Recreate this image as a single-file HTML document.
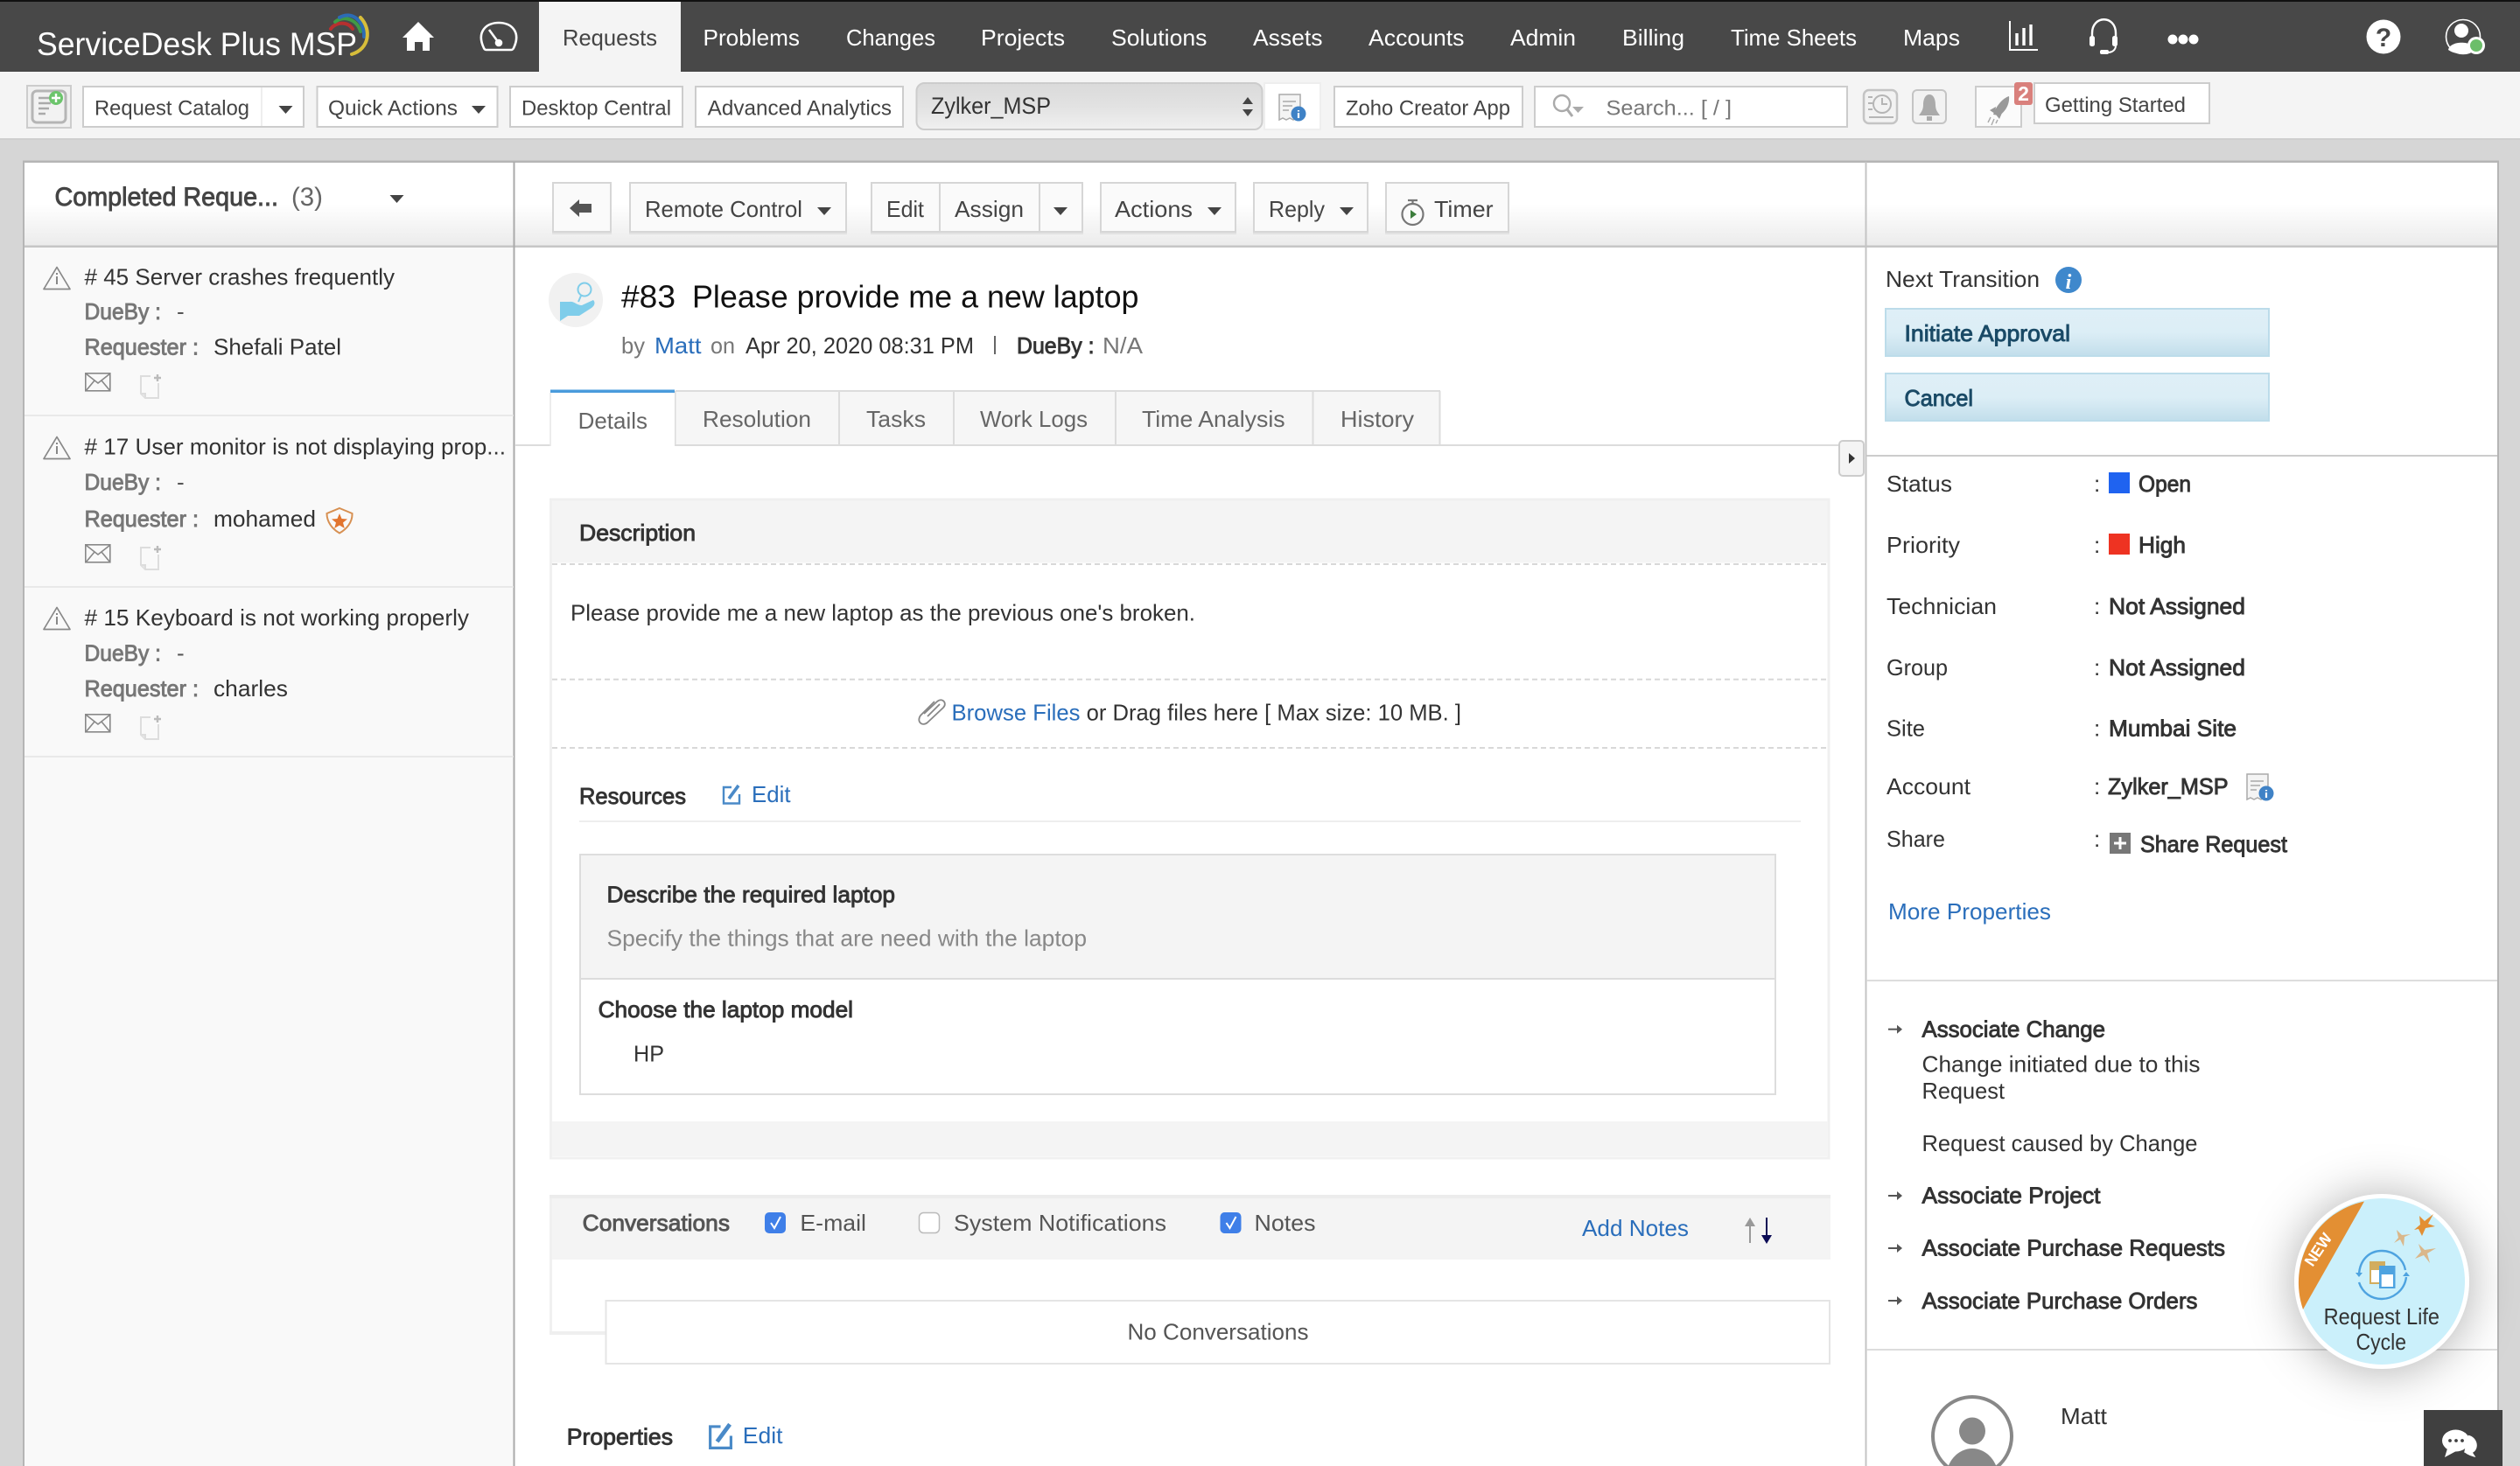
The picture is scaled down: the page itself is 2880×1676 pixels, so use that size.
<!DOCTYPE html>
<html lang="en"><head><meta charset="utf-8"><title>ServiceDesk Plus MSP</title>
<style>
html,body{margin:0;padding:0;background:#d6d6d6;width:2880px;height:1676px;overflow:hidden}
svg{display:block;font-family:"Liberation Sans",sans-serif;font-size:26px;fill:#333}
.n{fill:#fff}
.t{font-size:24px;fill:#444}
.m{stroke:currentColor;stroke-width:.9}
.dk{color:#333;fill:#333}
.g{color:#777;fill:#777}
.a{fill:#444}
.l{fill:#2a6ebb}
.tb{fill:#666}
</style></head><body>
<svg xmlns="http://www.w3.org/2000/svg" width="2880" height="1676" viewBox="0 0 2880 1676">
<defs>
<linearGradient id="hg" x1="0" y1="0" x2="0" y2="1"><stop offset="0" stop-color="#fff"/><stop offset=".5" stop-color="#fff"/><stop offset="1" stop-color="#ebebeb"/></linearGradient>
<linearGradient id="sel" x1="0" y1="0" x2="0" y2="1"><stop offset="0" stop-color="#dadada"/><stop offset=".5" stop-color="#e2e2e2"/><stop offset="1" stop-color="#f0f0f0"/></linearGradient>
<linearGradient id="bl" x1="0" y1="0" x2="0" y2="1"><stop offset="0" stop-color="#dfeff7"/><stop offset=".5" stop-color="#dceef6"/><stop offset="1" stop-color="#c2deeb"/></linearGradient>
<path id="c" d="M-8-4H8L0 5z" fill="#444"/>
<g id="warn" fill="none" stroke="#888" stroke-width="1.7" stroke-linejoin="round"><path d="M15 .5 30 25.5H0z"/><path d="M15 11v9M15 7v2" stroke-width="2"/></g>
<g id="env" fill="none" stroke="#888" stroke-width="1.6"><rect x=".8" y=".8" width="28" height="20"/><path d="M1 1 15 12 29 1M1 21 11 9M29 21 19 9"/></g>
<g id="doc" fill="none" stroke="#ddd" stroke-width="2"><path d="M12 2H1V22L6 27H21V10"/><path d="M1 22H6V27" fill="#e6e6e6"/><path d="M20 0V8M16 4H24" stroke="#bbb" stroke-width="2.4"/></g>
<g id="arr" fill="#555"><path d="M0-1H11V1H0z"/><path d="M10-5 16 0 10 5z"/></g>
<g id="rec"><path d="M3 1H27V30L23 28 19 30 15 28 11 30 7 28 3 30z" fill="#f4f4f4" stroke="#aaa" stroke-width="1.5"/><path d="M7 9H22M7 14H18M7 19H14" stroke="#aaa" stroke-width="1.5"/><circle cx="25" cy="23" r="8.5" fill="#3f82c6"/><path d="M25 19v1.5M25 22v6" stroke="#fff" stroke-width="2.2"/></g>
<g id="ed" fill="none" stroke="#4a8ac8" stroke-width="2.4"><path d="M11 3H2V21.500H20V11"/><path d="M8 16 19 1" stroke-width="3.600"/></g>
</defs>

<rect width="2880" height="1676" fill="#d6d6d6"/>
<rect width="2880" height="3" fill="#111"/>
<rect y="2" width="2880" height="80" fill="#484848"/>
<rect y="82" width="2880" height="76" fill="#f4f4f4"/>
<rect y="158" width="2880" height="2" fill="#cfcfcf"/>

<!-- logo -->
<text class="n" x="42" y="63" font-size="37" textLength="366" lengthAdjust="spacingAndGlyphs">ServiceDesk Plus MSP</text>
<g fill="none" stroke-width="4" stroke-linecap="round">
<path d="M378 33C384 25 397 24 403 33" stroke="#b6302f"/>
<path d="M383 25C393 17 408 22 412 36" stroke="#3f9a46"/>
<path d="M388 20C402 12 417 24 416 42" stroke="#2c6cb5"/>
<path d="M412 20C425 34 422 56 402 62" stroke="#d7bd3a"/>
</g>
<!-- home/gauge -->
<path d="M478 25 496 43H491V58H483V48H474V58H465V43H460z" fill="#fff"/>
<g fill="none" stroke="#fff" stroke-width="2.6"><path d="M553 55C544 36 556 26 570 26S596 36 587 55C586 57 585 57 584 57H556C555 57 554 57 553 55z"/><path d="M559 34 570 49" stroke-width="2.6"/></g><circle cx="570" cy="49" r="4.3" fill="#fff"/>

<rect x="616" y="2" width="162" height="80" fill="#f4f4f4"/>
<text class="a" x="643" y="52" textLength="108" lengthAdjust="spacingAndGlyphs">Requests</text>
<text class="n" x="803.5" y="52" textLength="110.5" lengthAdjust="spacingAndGlyphs">Problems</text>
<text class="n" x="967" y="52" textLength="102" lengthAdjust="spacingAndGlyphs">Changes</text>
<text class="n" x="1121" y="52" textLength="96" lengthAdjust="spacingAndGlyphs">Projects</text>
<text class="n" x="1270" y="52" textLength="109.5" lengthAdjust="spacingAndGlyphs">Solutions</text>
<text class="n" x="1432" y="52" textLength="79.5" lengthAdjust="spacingAndGlyphs">Assets</text>
<text class="n" x="1564" y="52" textLength="109.5" lengthAdjust="spacingAndGlyphs">Accounts</text>
<text class="n" x="1726" y="52" textLength="75" lengthAdjust="spacingAndGlyphs">Admin</text>
<text class="n" x="1854" y="52" textLength="71" lengthAdjust="spacingAndGlyphs">Billing</text>
<text class="n" x="1978" y="52" textLength="144" lengthAdjust="spacingAndGlyphs">Time Sheets</text>
<text class="n" x="2175" y="52" textLength="65" lengthAdjust="spacingAndGlyphs">Maps</text>
<!-- nav right icons -->
<path d="M2297 24V57H2329" fill="none" stroke="#fff" stroke-width="2"/><path d="M2305 38v14M2313 32v20M2321 28v24" stroke="#fff" stroke-width="3.4"/>
<g fill="none" stroke="#fff"><path d="M2391 44V38C2391 17 2418 17 2418 38V44" stroke-width="2.4"/><path d="M2418 52C2418 57 2414 60 2409 60" stroke-width="2"/></g><rect x="2388" y="41" width="6" height="12" rx="2.5" fill="#fff"/><rect x="2414" y="41" width="6" height="12" rx="2.5" fill="#fff"/><rect x="2400" y="57" width="10" height="5" rx="2" fill="#fff"/>
<circle cx="2483" cy="45" r="5.5" fill="#fff"/><circle cx="2495" cy="45" r="5.5" fill="#fff"/><circle cx="2507" cy="45" r="5.5" fill="#fff"/>
<circle cx="2724" cy="42" r="19.5" fill="#fff"/><text x="2724" y="53" text-anchor="middle" font-size="30" font-weight="bold" fill="#484848">?</text>
<circle cx="2815" cy="42" r="19.5" fill="none" stroke="#fff" stroke-width="1.6"/><circle cx="2813" cy="35" r="8" fill="#fff"/><path d="M2798 57C2800 46 2826 46 2830 57C2822 63 2806 63 2798 57z" fill="#fff"/><circle cx="2830" cy="52" r="10" fill="#fff"/><circle cx="2830" cy="52" r="7" fill="#6cbe6a"/>

<!-- toolbar -->
<rect x="31" y="98" width="50" height="48" fill="#f0f0f0" stroke="#ccc" stroke-width="2"/>
<rect x="37" y="104" width="38" height="36" rx="5" fill="#f2f2f2" stroke="#b5b5b5" stroke-width="3"/>
<path d="M44 112H58M44 118H58M44 124H56M44 130H52" stroke="#aaa" stroke-width="2.400"/><circle cx="64" cy="112" r="8" fill="#6cc56c"/><path d="M64 107v10M59 112h10" stroke="#fff" stroke-width="2.4"/>
<g fill="#fff" stroke="#ccc" stroke-width="2">
<rect x="95" y="99" width="252" height="46"/>
<rect x="362.5" y="99" width="206" height="46"/>
<rect x="583" y="99" width="197" height="46"/>
<rect x="795" y="99" width="237" height="46"/>
<rect x="1525" y="99" width="215" height="46"/>
<rect x="1754" y="99" width="357" height="46"/>
</g>
<path d="M299 100v44" stroke="#eee" stroke-width="2"/>
<text class="t" x="108" y="131.5" textLength="177" lengthAdjust="spacingAndGlyphs">Request Catalog</text>
<use href="#c" x="326.5" y="125"/>
<text class="t" x="375" y="131.5" textLength="148" lengthAdjust="spacingAndGlyphs">Quick Actions</text>
<use href="#c" x="547" y="125"/>
<text class="t" x="596" y="131.5" textLength="171" lengthAdjust="spacingAndGlyphs">Desktop Central</text>
<text class="t" x="808.7" y="131.5" textLength="210.3" lengthAdjust="spacingAndGlyphs">Advanced Analytics</text>
<rect x="1047.5" y="95" width="395" height="53" rx="9" fill="url(#sel)" stroke="#ccc" stroke-width="2"/>
<text x="1064" y="130" font-size="27" textLength="137" lengthAdjust="spacingAndGlyphs" fill="#333">Zylker_MSP</text>
<path d="M1426 111 1432 119H1420zM1426 133 1432 125H1420z" fill="#444"/>
<rect x="1445" y="95" width="64" height="53" fill="#fff" stroke="#eee" stroke-width="2"/>
<use href="#rec" x="1459" y="107"/>
<text class="t" x="1538" y="131.5" textLength="188" lengthAdjust="spacingAndGlyphs">Zoho Creator App</text>
<circle cx="1785" cy="118" r="9" fill="none" stroke="#aaa" stroke-width="2.4"/><path d="M1791 125 1797 133" stroke="#aaa" stroke-width="3"/><path d="M1797 122H1810L1803.5 129z" fill="#aaa"/>
<text x="1835.5" y="131.5" font-size="24" textLength="143.5" lengthAdjust="spacingAndGlyphs" fill="#777">Search... [ / ]</text>
<rect x="2130" y="103" width="38" height="38" rx="6" fill="#f2f2f2" stroke="#c4c4c4" stroke-width="2.5"/><circle cx="2151" cy="119" r="10" fill="none" stroke="#b5b5b5" stroke-width="2"/><path d="M2151 112v7h6M2135 111h5M2135 118h5M2135 125h5M2136 134h28" stroke="#b5b5b5" stroke-width="2" fill="none"/>
<rect x="2186" y="103" width="38" height="38" rx="5" fill="#f2f2f2" stroke="#c4c4c4" stroke-width="2"/><path d="M2205 108C2200 108 2198 114 2198 120C2198 126 2195 129 2193 132H2217C2215 129 2212 126 2212 120C2212 114 2210 108 2205 108zM2202 133H2208V138H2202z" fill="#aaa"/>
<rect x="2258" y="99" width="52" height="46" fill="#fbfbfb" stroke="#ccc" stroke-width="2"/>
<path d="M2296 110C2287 113 2280 124 2278 131L2285 132C2291 128 2297 120 2296 110z" fill="#999"/><path d="M2274 126 2281 122 2280 130zM2285 136 2289 127 2281 131z" fill="#999"/><path d="M2275 134 2272 140M2279 136 2276 143M2283 137 2281 141" stroke="#aaa" stroke-width="1.4"/>
<rect x="2325" y="95" width="200" height="46" fill="#fff" stroke="#ccc" stroke-width="2"/>
<rect x="2302" y="94" width="21" height="26" rx="3" fill="#d9807c"/><text x="2312.5" y="115" text-anchor="middle" font-size="23" font-weight="bold" fill="#fff">2</text>
<text class="t" x="2337" y="128" textLength="161" lengthAdjust="spacingAndGlyphs">Getting Started</text>

<!-- main panel -->
<rect x="26" y="184" width="2830" height="1492" fill="#fff"/>
<rect x="26" y="186" width="2828" height="95" fill="url(#hg)"/>
<rect x="26" y="183.5" width="2830" height="2.5" fill="#b5b5b5"/>
<rect x="26" y="184" width="2" height="1492" fill="#b5b5b5"/>
<rect x="2854" y="184" width="2" height="1492" fill="#b5b5b5"/>
<rect x="28" y="282" width="559" height="1394" fill="#f9f9f9"/>
<rect x="28" y="280.5" width="2826" height="2.5" fill="#c6c6c6"/>
<rect x="586.5" y="185" width="2" height="1491" fill="#aaa"/>
<rect x="2131.5" y="185" width="2" height="1491" fill="#c4c4c4"/>

<text x="62.5" y="235" font-size="30" textLength="255.5" lengthAdjust="spacingAndGlyphs" class="m" style="color:#444;fill:#444">Completed Reque...</text>
<text x="333" y="235" font-size="30" textLength="36" lengthAdjust="spacingAndGlyphs" fill="#666">(3)</text>
<use href="#c" x="453.5" y="227"/>

<!-- action buttons -->
<g fill="#e2e2e2"><rect x="631" y="265" width="68" height="3"/><rect x="719" y="265" width="249" height="3"/><rect x="995" y="265" width="243" height="3"/><rect x="1257" y="265" width="156" height="3"/><rect x="1432" y="265" width="132" height="3"/><rect x="1583" y="265" width="142" height="3"/></g>
<g fill="#fafafa" stroke="#d6d6d6" stroke-width="2">
<rect x="632" y="209" width="66" height="56"/>
<rect x="720" y="209" width="247" height="56"/>
<rect x="996" y="209" width="241" height="56"/>
<rect x="1258" y="209" width="154" height="56"/>
<rect x="1433" y="209" width="130" height="56"/>
<rect x="1584" y="209" width="140" height="56"/>
</g>
<path d="M1074 210v54M1188 210v54" stroke="#d6d6d6" stroke-width="2"/>
<path d="M651 238 662 228V233H676V243H662V248z" fill="#555"/>
<text class="a" x="737" y="248" textLength="180" lengthAdjust="spacingAndGlyphs">Remote Control</text><use href="#c" x="942" y="241"/>
<text class="a" x="1013" y="248" textLength="43" lengthAdjust="spacingAndGlyphs">Edit</text>
<text class="a" x="1091" y="248" textLength="79" lengthAdjust="spacingAndGlyphs">Assign</text><use href="#c" x="1212" y="241"/>
<text class="a" x="1274" y="248" textLength="89" lengthAdjust="spacingAndGlyphs">Actions</text><use href="#c" x="1388" y="241"/>
<text class="a" x="1450" y="248" textLength="64" lengthAdjust="spacingAndGlyphs">Reply</text><use href="#c" x="1539" y="241"/>
<circle cx="1614.5" cy="245" r="12" fill="none" stroke="#777" stroke-width="2.2"/><path d="M1609 229h11M1614.5 229v4" stroke="#777" stroke-width="2.2"/><path d="M1612 240 1619 245 1612 250z" fill="#3c7d3c"/>
<text class="a" x="1639" y="248" textLength="67.6" lengthAdjust="spacingAndGlyphs">Timer</text>

<!-- left list -->
<rect x="28" y="474" width="559" height="2" fill="#e9e9e9"/><rect x="28" y="670" width="559" height="2" fill="#e9e9e9"/><rect x="28" y="864" width="559" height="2" fill="#e9e9e9"/>
<use href="#warn" x="50" y="305"/><use href="#warn" x="50" y="499"/><use href="#warn" x="50" y="694"/>
<text x="96.500" y="325.5" textLength="354.500" lengthAdjust="spacingAndGlyphs">#&#160;45 Server crashes frequently</text>
<text x="96.500" y="365" class="g m" textLength="87.500" lengthAdjust="spacingAndGlyphs">DueBy :</text><text x="202" y="365" fill="#555">-</text>
<text x="96.500" y="405.7" class="g m" textLength="130.500" lengthAdjust="spacingAndGlyphs">Requester :</text><text x="244" y="405.7" textLength="146" lengthAdjust="spacingAndGlyphs">Shefali Patel</text>
<use href="#env" x="97" y="426"/><use href="#doc" x="160" y="428"/>
<text x="96.500" y="519.500" textLength="481.500" lengthAdjust="spacingAndGlyphs">#&#160;17 User monitor is not displaying prop...</text>
<text x="96.500" y="560" class="g m" textLength="87.500" lengthAdjust="spacingAndGlyphs">DueBy :</text><text x="202" y="560" fill="#555">-</text>
<text x="96.500" y="602" class="g m" textLength="130.500" lengthAdjust="spacingAndGlyphs">Requester :</text><text x="244" y="602" textLength="117" lengthAdjust="spacingAndGlyphs">mohamed</text>
<path d="M388 581 402.5 587C403 597 396 605 388 609.5C380 605 373.500 597 373.500 587z" fill="none" stroke="#d79052" stroke-width="2"/><path d="M388 587 390.500 593 397 593.500 392 597.500 393.800 604 388 600.500 382.200 604 384 597.500 379 593.500 385.500 593z" fill="#e2752f"/>
<use href="#env" x="97" y="622"/><use href="#doc" x="160" y="624"/>
<text x="96.500" y="715" textLength="439.500" lengthAdjust="spacingAndGlyphs">#&#160;15 Keyboard is not working properly</text>
<text x="96.500" y="755.500" class="g m" textLength="87.500" lengthAdjust="spacingAndGlyphs">DueBy :</text><text x="202" y="755.500" fill="#555">-</text>
<text x="96.500" y="796" class="g m" textLength="130.500" lengthAdjust="spacingAndGlyphs">Requester :</text><text x="244" y="796" textLength="85" lengthAdjust="spacingAndGlyphs">charles</text>
<use href="#env" x="97" y="816"/><use href="#doc" x="160" y="818"/>

<!-- center title -->
<ellipse cx="658" cy="343" rx="31" ry="31" fill="#f1f1f1"/>
<circle cx="668" cy="331" r="7.500" fill="none" stroke="#7fcdea" stroke-width="2"/><path d="M664 338 661 345" stroke="#7fcdea" stroke-width="2"/><path d="M640 345 H651 C656 344 659 349 665 349 L678 343 C681 346 679 350 676 352 L662 361 H649 L640 367z" fill="#7fcdea"/>
<text x="710" y="351.600" font-size="36" textLength="62" lengthAdjust="spacingAndGlyphs" fill="#111">#83</text>
<text x="791" y="351.600" font-size="36" textLength="510.500" lengthAdjust="spacingAndGlyphs" fill="#111">Please provide me a new laptop</text>
<text x="710" y="404" textLength="27" lengthAdjust="spacingAndGlyphs" fill="#777">by</text>
<text class="l" x="748" y="404" textLength="53.500" lengthAdjust="spacingAndGlyphs">Matt</text>
<text x="812" y="404" textLength="28" lengthAdjust="spacingAndGlyphs" fill="#777">on</text>
<text x="852" y="404" textLength="261" lengthAdjust="spacingAndGlyphs">Apr 20, 2020 08:31 PM</text>
<rect x="1136" y="384" width="2" height="21" fill="#666"/>
<text x="1162" y="404" class="dk m" textLength="88.500" lengthAdjust="spacingAndGlyphs">DueBy :</text>
<text x="1260" y="404" textLength="46" lengthAdjust="spacingAndGlyphs" fill="#777">N/A</text>

<!-- tabs -->
<rect x="589" y="508" width="1512" height="2" fill="#dcdcdc"/>
<rect x="772" y="446" width="874" height="62" fill="#f6f6f6"/>
<rect x="772" y="446" width="874" height="2" fill="#dcdcdc"/>
<path d="M771.500 447V508M959 447V508M1090 447V508M1275 447V508M1500.500 447V508M1645.500 447V508" stroke="#dcdcdc" stroke-width="2"/>
<rect x="629" y="446" width="142" height="66" fill="#fff"/>
<rect x="629" y="445.500" width="142" height="3.500" fill="#4a9bdc"/>
<path d="M629 449V510" stroke="#e6e6e6" stroke-width="1.500"/>
<text class="tb" x="660.600" y="490" textLength="79.400" lengthAdjust="spacingAndGlyphs">Details</text>
<text class="tb" x="803" y="488" textLength="124" lengthAdjust="spacingAndGlyphs">Resolution</text>
<text class="tb" x="990" y="488" textLength="68" lengthAdjust="spacingAndGlyphs">Tasks</text>
<text class="tb" x="1120" y="488" textLength="123" lengthAdjust="spacingAndGlyphs">Work Logs</text>
<text class="tb" x="1305" y="488" textLength="163.600" lengthAdjust="spacingAndGlyphs">Time Analysis</text>
<text class="tb" x="1532" y="488" textLength="84" lengthAdjust="spacingAndGlyphs">History</text>
<rect x="2102" y="504" width="28" height="40" rx="4" fill="#f4f4f4" stroke="#ccc" stroke-width="2"/><path d="M2113 518 2120 524 2113 530z" fill="#333"/>

<!-- description block -->
<rect x="629.500" y="571" width="1460.500" height="753" fill="#fff" stroke="#f0f0f0" stroke-width="3"/>
<rect x="631" y="572.500" width="1457.500" height="71" fill="#f4f4f4"/>
<path d="M631 645H2089M631 776.700H2089M631 855H2089" stroke="#d8d8d8" stroke-width="2" stroke-dasharray="6 4"/>
<text x="662" y="618" class="dk m" textLength="133" lengthAdjust="spacingAndGlyphs">Description</text>
<text x="652" y="709.500" textLength="714" lengthAdjust="spacingAndGlyphs">Please provide me a new laptop as the previous one's broken.</text>
<path d="M1056 816 1071 802C1077 797 1083 804 1078 809L1060 826C1054 831 1047 825 1052 818L1068 802M1060 819 1074 805" fill="none" stroke="#888" stroke-width="1.800"/>
<text class="l" x="1087.500" y="823.600" textLength="147" lengthAdjust="spacingAndGlyphs">Browse Files</text>
<text x="1241.600" y="823.600" textLength="428.400" lengthAdjust="spacingAndGlyphs">or Drag files here [ Max size: 10 MB. ]</text>
<text x="662" y="919" class="dk m" textLength="122" lengthAdjust="spacingAndGlyphs">Resources</text>
<use href="#ed" x="825" y="897"/>
<text class="l" x="859" y="917" textLength="44.500" lengthAdjust="spacingAndGlyphs">Edit</text>
<rect x="662" y="938" width="1396" height="2" fill="#eee"/>
<rect x="663" y="977" width="1366" height="274" fill="#fff" stroke="#ddd" stroke-width="2"/>
<rect x="664" y="978" width="1364" height="140" fill="#f4f4f4"/>
<rect x="664" y="1118" width="1364" height="2" fill="#dcdcdc"/>
<text x="693.500" y="1031.700" class="dk m" textLength="329.500" lengthAdjust="spacingAndGlyphs">Describe the required laptop</text>
<text x="693.500" y="1081.700" textLength="548.500" lengthAdjust="spacingAndGlyphs" fill="#888">Specify the things that are need with the laptop</text>
<text x="683.600" y="1163" class="dk m" textLength="291.400" lengthAdjust="spacingAndGlyphs">Choose the laptop model</text>
<text x="724" y="1213.500" textLength="35" lengthAdjust="spacingAndGlyphs">HP</text>
<rect x="631" y="1282" width="1458" height="40" fill="#f4f4f4"/>

<!-- conversations -->
<rect x="628" y="1366" width="1464" height="4" fill="#ececec"/>
<rect x="631" y="1370" width="1461" height="70" fill="#f4f4f4"/>
<rect x="628" y="1370" width="3" height="156" fill="#f0f0f0"/>
<rect x="628" y="1522" width="64" height="4" fill="#efefef"/>
<text x="665.700" y="1407" textLength="168.300" lengthAdjust="spacingAndGlyphs" class="m" style="color:#555;fill:#555">Conversations</text>
<rect x="874" y="1386" width="24" height="24" rx="5" fill="#3f7fe8"/><path d="M881 1398 885 1404 892 1391" fill="none" stroke="#fff" stroke-width="2"/>
<text x="914.400" y="1407" textLength="75.600" lengthAdjust="spacingAndGlyphs" fill="#555">E-mail</text>
<rect x="1050.500" y="1386.500" width="23" height="23" rx="5" fill="#fff" stroke="#bbb" stroke-width="1.500"/>
<text x="1090" y="1407" textLength="243" lengthAdjust="spacingAndGlyphs" fill="#555">System Notifications</text>
<rect x="1394.500" y="1386" width="24" height="24" rx="5" fill="#3f7fe8"/><path d="M1401.500 1398 1405.500 1404 1412.500 1391" fill="none" stroke="#fff" stroke-width="2"/>
<text x="1433.500" y="1407" textLength="70" lengthAdjust="spacingAndGlyphs" fill="#555">Notes</text>
<text class="l" x="1808" y="1413" textLength="122" lengthAdjust="spacingAndGlyphs">Add Notes</text>
<path d="M2000 1398V1421" stroke="#999" stroke-width="2"/><path d="M1994 1402 2000 1392 2006 1402z" fill="#999"/>
<path d="M2019 1392V1416" stroke="#0b0b55" stroke-width="2"/><path d="M2013 1412 2019 1422 2025 1412z" fill="#0b0b55"/>
<rect x="692.500" y="1487" width="1398.500" height="72" fill="#fff" stroke="#e5e5e5" stroke-width="2"/>
<text x="1288.500" y="1531.700" textLength="207" lengthAdjust="spacingAndGlyphs" fill="#555">No Conversations</text>
<text x="647.800" y="1651.700" class="dk m" textLength="121.200" lengthAdjust="spacingAndGlyphs">Properties</text>
<g transform="translate(809 1627) scale(1.320)"><use href="#ed"/></g>
<text class="l" x="848.800" y="1650" textLength="45.700" lengthAdjust="spacingAndGlyphs">Edit</text>

<!-- right panel -->
<text x="2155" y="328" textLength="176" lengthAdjust="spacingAndGlyphs">Next Transition</text>
<circle cx="2364" cy="320" r="15" fill="#3f88cc"/><text x="2364" y="330" text-anchor="middle" font-size="24" font-family="Liberation Serif" font-style="italic" font-weight="bold" fill="#fff">i</text>
<rect x="2155" y="353" width="438" height="54" fill="url(#bl)" stroke="#bcdcea" stroke-width="2"/>
<text x="2176.500" y="390" textLength="189.500" lengthAdjust="spacingAndGlyphs" class="m" style="color:#1a4a66;fill:#1a4a66">Initiate Approval</text>
<rect x="2155" y="427" width="438" height="54" fill="url(#bl)" stroke="#bcdcea" stroke-width="2"/>
<text x="2176.500" y="464" textLength="78.500" lengthAdjust="spacingAndGlyphs" class="m" style="color:#1a4a66;fill:#1a4a66">Cancel</text>
<rect x="2133" y="520" width="721" height="2" fill="#ccc"/>
<text x="2156" y="562" textLength="75" lengthAdjust="spacingAndGlyphs">Status</text><text x="2393" y="562">:</text><rect x="2410" y="540" width="24" height="24" fill="#1f63f0"/><text x="2444" y="562" class="dk m" textLength="60" lengthAdjust="spacingAndGlyphs">Open</text>
<text x="2156" y="632" textLength="84" lengthAdjust="spacingAndGlyphs">Priority</text><text x="2393" y="632">:</text><rect x="2410" y="610" width="24" height="24" fill="#ee3322"/><text x="2444" y="632" class="dk m" textLength="54" lengthAdjust="spacingAndGlyphs">High</text>
<text x="2156" y="702" textLength="126" lengthAdjust="spacingAndGlyphs">Technician</text><text x="2393" y="702">:</text><text x="2410" y="702" class="dk m" textLength="156" lengthAdjust="spacingAndGlyphs">Not Assigned</text>
<text x="2156" y="772" textLength="70" lengthAdjust="spacingAndGlyphs">Group</text><text x="2393" y="772">:</text><text x="2410" y="772" class="dk m" textLength="156" lengthAdjust="spacingAndGlyphs">Not Assigned</text>
<text x="2156" y="841.600" textLength="44" lengthAdjust="spacingAndGlyphs">Site</text><text x="2393" y="841.600">:</text><text x="2410" y="841.600" class="dk m" textLength="146" lengthAdjust="spacingAndGlyphs">Mumbai Site</text>
<text x="2156" y="908" textLength="96" lengthAdjust="spacingAndGlyphs">Account</text><text x="2393" y="908">:</text><text x="2409" y="908" class="dk m" textLength="137.600" lengthAdjust="spacingAndGlyphs">Zylker_MSP</text>
<use href="#rec" x="2565" y="884"/>
<text x="2156" y="968" textLength="67" lengthAdjust="spacingAndGlyphs">Share</text><text x="2393" y="968">:</text>
<rect x="2411" y="952" width="24" height="24" fill="#777"/><path d="M2423 957v14M2416 964h14" stroke="#fff" stroke-width="3"/>
<text x="2446" y="974" class="dk m" textLength="168" lengthAdjust="spacingAndGlyphs">Share Request</text>
<text class="l" x="2158" y="1051" textLength="186" lengthAdjust="spacingAndGlyphs">More Properties</text>
<rect x="2133" y="1120" width="721" height="2" fill="#ddd"/>
<use href="#arr" x="2158" y="1176.700"/><use href="#arr" x="2158" y="1367"/><use href="#arr" x="2158" y="1427"/><use href="#arr" x="2158" y="1487"/>
<text x="2196.500" y="1185.600" class="dk m" textLength="209.500" lengthAdjust="spacingAndGlyphs">Associate Change</text>
<text x="2196.500" y="1225.700" textLength="318" lengthAdjust="spacingAndGlyphs">Change initiated due to this</text>
<text x="2196.500" y="1256" textLength="94.500" lengthAdjust="spacingAndGlyphs">Request</text>
<text x="2196.500" y="1316" textLength="315" lengthAdjust="spacingAndGlyphs">Request caused by Change</text>
<text x="2196.500" y="1375.500" class="dk m" textLength="204" lengthAdjust="spacingAndGlyphs">Associate Project</text>
<text x="2196.500" y="1435.600" class="dk m" textLength="346.500" lengthAdjust="spacingAndGlyphs">Associate Purchase Requests</text>
<text x="2196.500" y="1496" class="dk m" textLength="315" lengthAdjust="spacingAndGlyphs">Associate Purchase Orders</text>
<rect x="2133" y="1542" width="721" height="2" fill="#ddd"/>
<!-- requester -->
<clipPath id="av"><circle cx="2254" cy="1642" r="45"/></clipPath>
<circle cx="2254" cy="1642" r="45" fill="#fff" stroke="#888" stroke-width="4"/>
<ellipse cx="2254" cy="1636" rx="15" ry="15.500" fill="#888"/>
<ellipse cx="2254" cy="1690" rx="30" ry="34" fill="#888" clip-path="url(#av)"/>
<text x="2355" y="1628" textLength="53" lengthAdjust="spacingAndGlyphs">Matt</text>

<!-- lifecycle -->
<circle cx="2722" cy="1465" r="100" fill="#fff" style="filter:drop-shadow(0 2px 28px rgba(0,0,0,.32))"/>
<circle cx="2722" cy="1465" r="95" fill="#cbf0fb"/>
<path d="M2702 1373.500 2632 1497A95 95 0 0 1 2702 1373.500z" fill="#e38f33"/>
<text transform="translate(2643 1449) rotate(-56)" font-size="18" font-weight="bold" fill="#fff" textLength="41" lengthAdjust="spacingAndGlyphs">NEW</text>
<path d="M2781 1388 2775 1399 2783 1402 2772 1404 2768 1413 2764 1405 2759 1406 2766 1400 2765 1390 2771 1396z" fill="#e38f33"/>
<path d="M2755 1411 2748 1414 2747 1425 2743 1417 2736 1421 2741 1415 2739 1406 2745 1412z" fill="#dab78a"/>
<path d="M2784 1427 2774 1433 2777 1444 2770 1435 2760 1439 2767 1431 2764 1422 2771 1429z" fill="#dab78a"/>
<g fill="none" stroke="#4ea3e0" stroke-width="2.400"><path d="M2696 1457C2697 1440 2708 1430 2722 1430S2747 1440 2749 1452"/><path d="M2696 1466C2700 1478 2710 1485 2722 1485S2748 1476 2750 1460"/></g>
<path d="M2692 1455H2700L2696 1460zM2746 1459 2750 1454 2754 1459z" fill="#4ea3e0"/>
<rect x="2708" y="1442" width="18" height="26" fill="#d2ad5e"/><rect x="2710" y="1452" width="10" height="14" fill="#fff"/>
<rect x="2719" y="1447" width="18.500" height="26" fill="#4ea3e0"/><rect x="2721.700" y="1457" width="13.300" height="14" fill="#fff"/>
<text x="2655.600" y="1514" textLength="132.400" lengthAdjust="spacingAndGlyphs" fill="#333">Request Life</text>
<text x="2692.500" y="1543" textLength="57.500" lengthAdjust="spacingAndGlyphs" fill="#333">Cycle</text>

<!-- chat -->
<rect x="2770" y="1612" width="90" height="64" fill="#404040"/>
<path d="M2821 1640C2832 1642 2835 1656 2827 1661L2831 1667C2824 1666 2820 1664 2816 1661" fill="#fff" stroke="#404040" stroke-width="1.500"/>
<ellipse cx="2806.500" cy="1647" rx="15.500" ry="12.500" fill="#fff"/><path d="M2797 1656 2794 1666 2807 1659z" fill="#fff"/>
<circle cx="2800" cy="1647" r="1.900" fill="#404040"/><circle cx="2807" cy="1647" r="1.900" fill="#404040"/><circle cx="2814" cy="1647" r="1.900" fill="#404040"/>
</svg>
</body></html>
